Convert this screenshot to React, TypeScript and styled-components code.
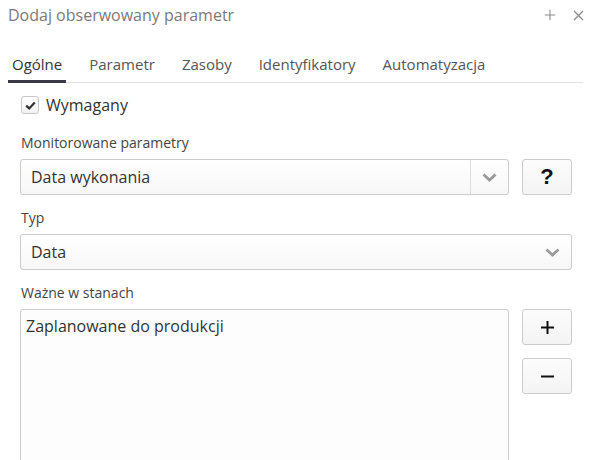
import styled, { createGlobalStyle } from 'styled-components';

const Global = createGlobalStyle`
body {
    margin: 0;
    background: #fff;
    font-family: "Open Sans", "Noto Sans", sans-serif;
    color: #333;
}
`

const Dialog = styled.div`
width: 593px;
height: 460px;
overflow: hidden;
background: #fff;
`

const Header = styled.header`
display: flex;
align-items: center;
height: 30px;
padding: 0 8px;
`

const Title = styled.h1`
flex: 1;
margin: 0;
font-size: 16px;
font-weight: 400;
color: #7a7a7a;
`

const HeaderIcon = styled.button`
border: 0;
background: none;
padding: 0;
margin-left: 14px;
width: 14px;
height: 14px;
display: flex;
align-items: center;
justify-content: center;
color: #8a8a8a;
`

const Tabs = styled.nav`
display: flex;
gap: 19px;
margin: 15px 10px 0 8px;
border-bottom: 1px solid #e2e2e2;
`

type TabProp = {
    active?: boolean
}

const Tab = styled.div<TabProp>`
padding: 0 4px;
height: 38px;
line-height: 38px;
font-size: 15px;
color: ${p => p.active ? '#333' : '#555'};
border-bottom: 3px solid ${p => p.active ? '#3a3a48' : 'transparent'};
margin-bottom: -1px;
box-sizing: border-box;
`

const Body = styled.section`
padding: 13px 21px 0 20px;
display: flex;
flex-direction: column;
`

const CheckRow = styled.label`
display: flex;
align-items: center;
gap: 7px;
font-size: 16px;
color: #333;
margin-left: 1px;
height: 18px;
`

const Box = styled.span`
width: 16px;
height: 16px;
border: 1px solid #c8c8c8;
border-radius: 3px;
background: linear-gradient(#fff, #f2f2f2);
display: flex;
align-items: center;
justify-content: center;
`

const Field = styled.div`
margin-top: 19px;
display: flex;
flex-direction: column;
gap: 6px;
& + & {
    margin-top: 13px;
}
`

const Label = styled.div`
font-size: 14px;
line-height: 20px;
color: #444;
margin-left: 1px;
`

const Row = styled.div`
display: flex;
gap: 13px;
align-items: flex-start;
`

const Control = styled.div`
flex: 1 1 auto;
min-width: 0;
height: 36px;
box-sizing: border-box;
border: 1px solid #ccc;
border-radius: 3px;
background: linear-gradient(#fff, #f7f7f7);
display: flex;
align-items: center;
font-size: 16px;
color: #333;
`

const Value = styled.span`
flex: 1;
padding-left: 10px;
`

const Arrow = styled.span<{ divided?: boolean }>`
width: 37px;
height: 100%;
display: flex;
align-items: center;
justify-content: center;
border-left: ${p => p.divided ? '1px solid #ddd' : '0'};
`

const Side = styled.div`
display: flex;
flex-direction: column;
gap: 13px;
`

const Btn = styled.button`
width: 50px;
height: 36px;
box-sizing: border-box;
border: 1px solid #ccc;
border-radius: 3px;
background: linear-gradient(#fcfcfc, #f4f4f4);
display: flex;
align-items: center;
justify-content: center;
padding: 0;
color: #111;
`

const Question = styled.span`
font-family: "Liberation Sans", Arial, sans-serif;
font-weight: 700;
font-size: 22px;
`

const Area = styled.div`
flex: 1 1 auto;
min-width: 0;
height: 170px;
box-sizing: border-box;
border: 1px solid #ccc;
border-radius: 3px;
background: #fdfdfd;
padding: 5px 5px;
font-size: 16px;
line-height: 22px;
color: #333;
`

const Chevron = () => (
    <svg width="15" height="9" viewBox="0 0 15 9">
        <path d="M1.5 1.5 L7.5 7 L13.5 1.5" fill="none" stroke="#9a9a9a" strokeWidth="2.8" />
    </svg>
)

const PlusIcon = ({ color = '#111', size = 15, w = 2 }) => (
    <svg width={size} height={size} viewBox="0 0 15 15">
        <path d="M7.5 1 V14 M1 7.5 H14" stroke={color} strokeWidth={w} />
    </svg>
)

function App() {
    return (
        <Dialog>
            <Global />
            <Header>
                <Title>Dodaj obserwowany parametr</Title>
                <HeaderIcon><PlusIcon color="#8a8a8a" size={12} w={1.3} /></HeaderIcon>
                <HeaderIcon>
                    <svg width="11" height="11" viewBox="0 0 11 11">
                        <path d="M1 1 L10 10 M10 1 L1 10" stroke="#8a8a8a" strokeWidth="1.3" />
                    </svg>
                </HeaderIcon>
            </Header>

            <Tabs>
                <Tab active>Ogólne</Tab>
                <Tab>Parametr</Tab>
                <Tab>Zasoby</Tab>
                <Tab>Identyfikatory</Tab>
                <Tab>Automatyzacja</Tab>
            </Tabs>

            <Body>
                <CheckRow>
                    <Box>
                        <svg width="11" height="9" viewBox="0 0 11 9">
                            <path d="M1.2 4.6 L4.2 7.4 L9.8 1.6" fill="none" stroke="#333" strokeWidth="2.2" />
                        </svg>
                    </Box>
                    Wymagany
                </CheckRow>

                <Field>
                    <Label>Monitorowane parametry</Label>
                    <Row>
                        <Control>
                            <Value>Data wykonania</Value>
                            <Arrow divided><Chevron /></Arrow>
                        </Control>
                        <Btn><Question>?</Question></Btn>
                    </Row>
                </Field>

                <Field>
                    <Label>Typ</Label>
                    <Control>
                        <Value>Data</Value>
                        <Arrow><Chevron /></Arrow>
                    </Control>
                </Field>

                <Field>
                    <Label>Ważne w stanach</Label>
                    <Row>
                        <Area>Zaplanowane do produkcji</Area>
                        <Side>
                            <Btn><PlusIcon /></Btn>
                            <Btn>
                                <svg width="15" height="15" viewBox="0 0 15 15">
                                    <path d="M1 7.5 H14" stroke="#111" strokeWidth="2" />
                                </svg>
                            </Btn>
                        </Side>
                    </Row>
                </Field>
            </Body>
        </Dialog>
    );
}

export default App;
